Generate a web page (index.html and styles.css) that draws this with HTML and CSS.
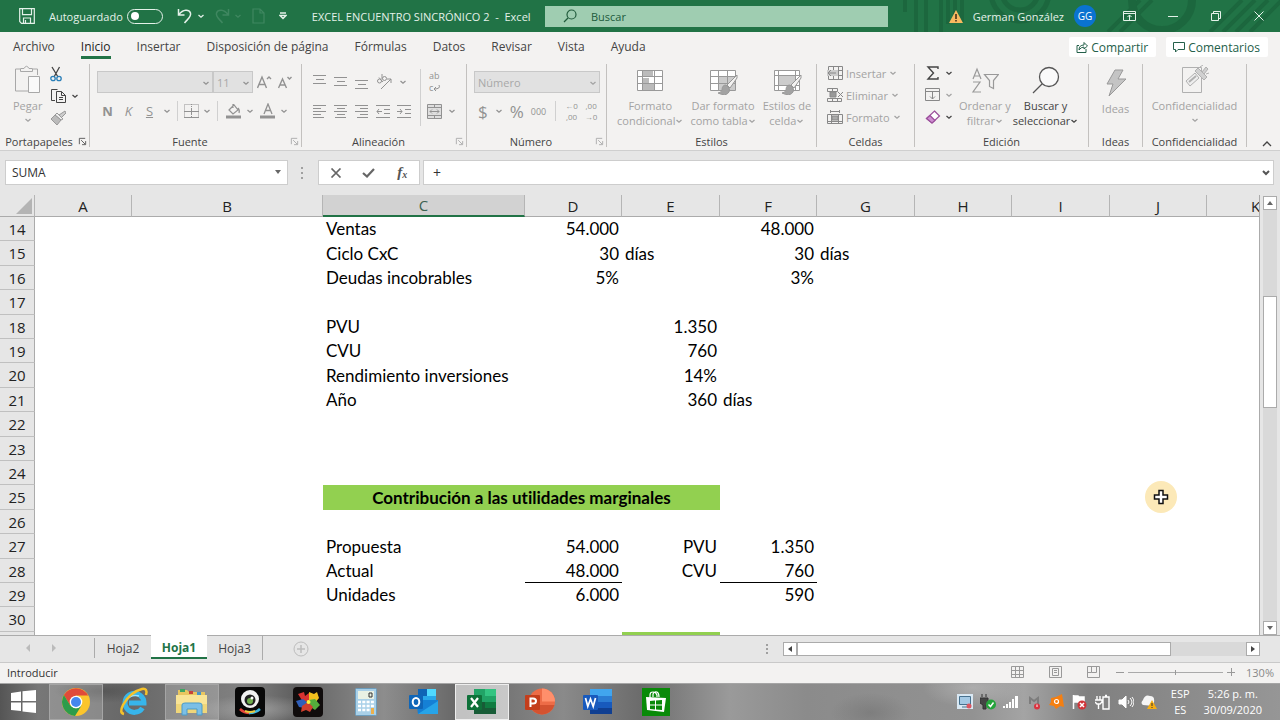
FILE: index.html
```html
<!DOCTYPE html>
<html lang="es">
<head>
<meta charset="utf-8">
<title>EXCEL ENCUENTRO SINCRÓNICO 2 - Excel</title>
<link rel="stylesheet" href="styles.css">
</head>
<body>
<svg class="defs" aria-hidden="true">
  <symbol id="chev" viewBox="0 0 8 8"><path d="M1.5 3 4 5.2 6.500 3" fill="none" stroke="currentColor" stroke-width="1.300"/></symbol>
  <symbol id="launch" viewBox="0 0 10 10"><path d="M1.500 8V1.500H8M3.500 3.500 8 8M8.500 4.500v4h-4" fill="none" stroke="currentColor"/></symbol>
  <symbol id="brush" viewBox="0 0 20 22"><path d="M19 1 9 11l3 3L19 4z" fill="#f3f2f1" stroke="#979797"/><path d="M8 11q-4 0-4 5-1 3-4 3 8 4 11-1 1-2 0-4z" fill="#a2a2a2"/></symbol>
</svg>
<div class="app">
  <header class="titlebar">
    <svg class="pattern" viewBox="0 0 430 32" aria-hidden="true" fill="none" stroke="#185c37" opacity=".5">
      <path d="M55 0v12M66 0v32M76 0v32M91 0v32M98 0v24M105 0v14M112 0v22" stroke-width="4"/>
      <circle cx="170" cy="-8" r="18" stroke-width="5"/><circle cx="170" cy="-8" r="29" stroke-width="5"/>
      <path d="m258 32 32-32M270 32l32-32M360 32l32-32M373 32l32-32M386 32l32-32M400 32l32-32" stroke-width="4"/>
      <circle cx="312" cy="0" r="30" stroke-width="8"/>
    </svg>
    <div class="quick">
      <button class="qbtn save" aria-label="Guardar"><svg width="16" height="16" viewBox="0 0 16 16" fill="none" stroke="currentColor" stroke-width="1.200"><path d="M.7.7h14.600v14.600H2.500L.7 13.500zM3.500.7v6h9v-6M4.500 15v-5h7v5M6.500 12v3"/></svg></button>
      <label class="auto">Autoguardado<input type="checkbox" role="switch"></label>
      <button class="qbtn undo" aria-label="Deshacer"><svg width="16" height="16" viewBox="0 0 16 16" fill="none" stroke="currentColor" stroke-width="1.500"><path d="M1.500 1v6h6M2 6.500C6 1 12 1 13.500 5c1 4-3 6-6 10"/></svg><svg width="8" height="8"><use href="#chev"/></svg></button>
      <button class="qbtn redo" disabled aria-label="Rehacer"><svg width="16" height="16" viewBox="0 0 16 16" fill="none" stroke="currentColor" stroke-width="1.500"><path d="M14.500 1v6h-6M14 6.500C10 1 4 1 2.500 5c-1 4 3 6 6 10"/></svg><svg width="8" height="8"><use href="#chev"/></svg></button>
      <button class="qbtn newdoc" disabled aria-label="Nuevo"><svg width="13" height="16" viewBox="0 0 13 16" fill="none" stroke="currentColor" stroke-width="1.200"><path d="M1 1h7l4 4v10H1zM8 1v4h4"/></svg></button>
      <button class="qbtn custom" aria-label="Personalizar"><svg width="8" height="8" viewBox="0 0 8 8" fill="none" stroke="currentColor" stroke-width="1.300"><path d="M1 1h6M1 3.500h6L4 6.500z"/></svg></button>
      <h1 class="doc">EXCEL ENCUENTRO SINCRÓNICO 2 &nbsp;- &nbsp;Excel</h1>
    </div>
    <div class="search">
      <svg width="14" height="14" viewBox="0 0 14 14" fill="none" stroke="#215b3c" stroke-width="1.200"><circle cx="8.500" cy="5.500" r="4.500"/><path d="M5 9 1 13"/></svg>
      <input type="search" placeholder="Buscar" aria-label="Buscar">
    </div>
    <div class="account">
      <svg width="14" height="13" viewBox="0 0 14 13"><path d="M7 0 14 13H0z" fill="#f8ba60"/><path d="M7 4v5M7 10v1.500" stroke="#463018" stroke-width="1.600"/></svg>
      <span class="user">German González</span>
      <span class="avatar">GG</span>
      <button class="wbtn" aria-label="Opciones de cinta"><svg width="14" height="11" viewBox="0 0 14 11" fill="none" stroke="currentColor"><path d="M.5.5h12v9H.5zM.5 2.500h12M6.500 9V4M4.500 6l2-2 2 2"/></svg></button>
      <button class="wbtn" aria-label="Minimizar"><svg width="10" height="10" viewBox="0 0 10 10" stroke="currentColor"><path d="M0 5.500h10"/></svg></button>
      <button class="wbtn" aria-label="Restaurar"><svg width="10" height="10" viewBox="0 0 10 10" fill="none" stroke="currentColor"><path d="M.5 2.500h7v7h-7zM2.500 2V.5h7v7H8"/></svg></button>
      <button class="wbtn" aria-label="Cerrar"><svg width="10" height="10" viewBox="0 0 10 10" stroke="currentColor"><path d="m.5.5 9 9M9.500.5l-9 9"/></svg></button>
    </div>
  </header>

  <nav class="tabs">
    <button>Archivo</button><button class="on">Inicio</button><button>Insertar</button><button>Disposición de página</button><button>Fórmulas</button><button>Datos</button><button>Revisar</button><button>Vista</button><button>Ayuda</button>
    <div class="share">
      <button><svg width="12" height="12" viewBox="0 0 12 12" fill="none" stroke="currentColor"><path d="M3 4.500H1v7h9V8M3 9q0-5 5-5V1.500L11.500 5 8 8V6Q5 6 3 9z"/></svg>Compartir</button>
      <button><svg width="12" height="12" viewBox="0 0 12 12" fill="none" stroke="currentColor"><path d="M.5 1.500h11v7H5L2.500 11V8.500h-2z"/></svg>Comentarios</button>
    </div>
  </nav>

  <section class="ribbon">
    <div class="group g-clip">
      <div class="body">
        <button class="big off"><svg width="28" height="30" viewBox="0 0 28 30" fill="none" stroke="#a8a8a8"><path d="M6 4H1.500v22H14M19 4h4.500v6"/><path d="M6.500 6.500V3.500H10Q12.500-1 15 3.500h3.500v3z"/><path d="M14.500 11.500h11v16h-11z" fill="#fafafa"/></svg>Pegar<svg width="8" height="8"><use href="#chev"/></svg></button>
        <div class="stack">
          <button aria-label="Cortar"><svg width="12" height="16" viewBox="0 0 12 16" fill="none"><path d="M2 1l6 10M9.500 1 4 11" stroke="#444" stroke-width="1.300"/><circle cx="3" cy="12.500" r="2.200" stroke="#2a7fb8" stroke-width="1.300"/><circle cx="9" cy="12.500" r="2.200" stroke="#2a7fb8" stroke-width="1.300"/></svg></button>
          <button aria-label="Copiar"><svg width="17" height="16" viewBox="0 0 17 16" fill="none" stroke="#444"><path d="M5 12.500H1.500v-11h6"/><path d="M6.500 3.500h5l4 4v7h-9zM11.500 3.500v4h4M9 9.500h4M9 11.500h4"/></svg><svg width="8" height="8"><use href="#chev"/></svg></button>
          <button class="off" aria-label="Copiar formato"><svg width="16" height="16" viewBox="0 0 16 16"><path d="M15 1 9 5l2 3 5-5z" fill="#ccc" stroke="#999"/><path d="m7 3 6 6-2 1-6-5z" fill="#eee" stroke="#999"/><path d="M5 5 1 9l6 6 4-5z" fill="#bbb" stroke="#999"/></svg></button>
        </div>
      </div>
      <div class="foot"><span>Portapapeles</span><button aria-label="Portapapeles"><svg width="9" height="9"><use href="#launch" width="9" height="9"/></svg></button></div>
    </div>

    <div class="group g-font off">
      <div class="body rows">
        <div class="row">
          <span class="sel w-font"><select disabled aria-label="Fuente"><option></option></select><svg width="8" height="8"><use href="#chev"/></svg></span><span class="sel w-size"><select disabled aria-label="Tamaño"><option>11</option></select><svg width="8" height="8"><use href="#chev"/></svg></span>
          <button class="glyph grow" aria-label="Aumentar tamaño"><svg width="15" height="14" viewBox="0 0 15 14" fill="none" stroke="currentColor" stroke-width="1.400"><path d="M.5 13 5 2l4.500 11M2 9.500h6M10 4l2-2 2 2"/></svg></button>
          <button class="glyph" aria-label="Reducir tamaño"><svg width="14" height="14" viewBox="0 0 14 14" fill="none" stroke="currentColor" stroke-width="1.400"><path d="M.5 13 4.500 4l4 9M2 10h5M9.500 2l2 2 2-2"/></svg></button>
        </div>
        <div class="row r-bold">
          <button class="ltr"><b>N</b></button><button class="ltr"><i>K</i></button><button class="ltr"><u>S</u></button><svg width="8" height="8"><use href="#chev"/></svg>
          <span class="vr"></span>
          <button aria-label="Bordes"><svg width="15" height="15" viewBox="0 0 15 15" fill="none" stroke="currentColor"><path d="M.5.5h14v13H.5zM7.500 0v14" stroke-dasharray="1 1"/><path d="M0 7.500h15M0 13.500h15M7.500 4v7"/></svg></button><svg width="8" height="8"><use href="#chev"/></svg>
          <span class="vr"></span>
          <button class="tint" aria-label="Relleno"><svg width="16" height="16" viewBox="0 0 16 16" fill="none" stroke="currentColor" stroke-width="1.200"><path d="M3 7 8 2l4 5-5 4zM7 5V1M12 5q2 2 1 5"/><path d="M0 14h15" stroke-width="3"/></svg></button><svg width="8" height="8"><use href="#chev"/></svg>
          <button class="tint" aria-label="Color de fuente"><svg width="16" height="16" viewBox="0 0 16 16" fill="none" stroke="currentColor" stroke-width="1.300"><path d="m4 11 4-10 4 10M5 7.500h6"/><path d="M0 14h15" stroke-width="3"/></svg></button><svg width="8" height="8"><use href="#chev"/></svg>
        </div>
      </div>
      <div class="foot"><span>Fuente</span><button aria-label="Fuente"><svg width="9" height="9"><use href="#launch" width="9" height="9"/></svg></button></div>
    </div>

    <div class="group g-align off">
      <div class="body rows">
        <div class="row r-al">
          <button aria-label="Arriba"><svg width="14" height="16" viewBox="0 0 14 16" stroke="currentColor"><path d="M0 1.500h13M3 5.500h8M0 9.500h13"/></svg></button>
          <button aria-label="Medio"><svg width="14" height="16" viewBox="0 0 14 16" stroke="currentColor"><path d="M0 3.500h13M3 7.500h8M0 11.500h13"/></svg></button>
          <button aria-label="Abajo"><svg width="14" height="16" viewBox="0 0 14 16" stroke="currentColor"><path d="M0 6.500h13M3 10.500h8M0 14.500h13"/></svg></button>
          <button aria-label="Orientación"><svg width="16" height="16" viewBox="0 0 16 16" fill="none" stroke="currentColor"><circle cx="3.500" cy="7" r="2"/><path d="M3 3.500 7 8"/><circle cx="8.500" cy="4.500" r="2"/><path d="M6 0v5M5 15 15 5M11 5h4v4"/></svg></button>
          <svg width="8" height="8"><use href="#chev"/></svg>
        </div>
        <div class="row r-al">
          <button aria-label="Izquierda"><svg width="14" height="14" viewBox="0 0 14 14" stroke="currentColor"><path d="M0 1.500h13M0 4.500h8M0 7.500h13M0 10.500h8M0 13.500h11"/></svg></button>
          <button aria-label="Centro"><svg width="14" height="14" viewBox="0 0 14 14" stroke="currentColor"><path d="M0 1.500h13M3 4.500h8M0 7.500h13M3 10.500h8M1 13.500h11"/></svg></button>
          <button aria-label="Derecha"><svg width="14" height="14" viewBox="0 0 14 14" stroke="currentColor"><path d="M0 1.500h13M5 4.500h8M0 7.500h13M5 10.500h8M2 13.500h11"/></svg></button>
          <button aria-label="Reducir sangría"><svg width="14" height="14" viewBox="0 0 14 14" fill="none" stroke="currentColor"><path d="M0 1.500h14M8 5.500h6M8 9.500h6M0 13.500h14M1 7.500h5M3 5 1 7.500 3 10"/></svg></button>
          <button aria-label="Aumentar sangría"><svg width="14" height="14" viewBox="0 0 14 14" fill="none" stroke="currentColor"><path d="M0 1.500h14M8 5.500h6M8 9.500h6M0 13.500h14M0 7.500h5M3 5l2 2.500L3 10"/></svg></button>
        </div>
      </div>
      <div class="side">
        <button class="wrap" aria-label="Ajustar texto"><span>ab</span><span>c<svg width="8" height="12" viewBox="0 0 8 12" fill="none" stroke="currentColor"><path d="M6 3q2 4-5 4M3 5 1 7l2 2"/></svg></span></button>
        <div class="row"><button aria-label="Combinar"><svg width="15" height="15" viewBox="0 0 15 15" fill="#dedede" stroke="currentColor"><path d="M.5.5h14v14H.5zM.5 3.500h14M.5 11.500h14M7.500.5v3M7.500 11.500v3M3 7.500h9M5 5.500 3 7.500l2 2M10 5.500l2 2-2 2"/></svg></button><svg width="8" height="8"><use href="#chev"/></svg></div>
      </div>
      <div class="foot"><span>Alineación</span><button aria-label="Alineación"><svg width="9" height="9"><use href="#launch" width="9" height="9"/></svg></button></div>
    </div>

    <div class="group g-num off">
      <div class="body rows">
        <div class="row"><span class="sel w-num"><select disabled aria-label="Formato de número"><option>Número</option></select><svg width="8" height="8"><use href="#chev"/></svg></span></div>
        <div class="row r-num">
          <button class="cur">$</button><svg width="8" height="8"><use href="#chev"/></svg><button class="cur">%</button><button class="zero">000</button><span class="vr"></span>
          <button class="dec"><span>←0</span><span>,00</span></button><button class="dec"><span>,00</span><span>→0</span></button>
        </div>
      </div>
      <div class="foot"><span>Número</span><button aria-label="Número"><svg width="9" height="9"><use href="#launch" width="9" height="9"/></svg></button></div>
    </div>

    <div class="group g-style off">
      <div class="body">
        <button class="big"><svg width="28" height="30" viewBox="0 0 28 30" fill="none" stroke="#999"><path d="M1.500 5.500h25v20h-25z" fill="#fff"/><path d="M7 6h10v5H7zM7 13h6v5H7zM7 19h11v6H7z" fill="#bbb" stroke="none"/><path d="M1 11.500h26M1 18.500h26M6.500 5v21M18.500 5v21"/></svg>Formato<span>condicional<svg width="8" height="8"><use href="#chev"/></svg></span></button>
        <button class="big"><svg width="32" height="30" viewBox="0 0 32 30" fill="none" stroke="#999"><path d="M3.500 5.500h25v20h-25z" fill="#fff"/><path d="M12 12h16v13H12z" fill="#ccc" stroke="none"/><path d="M3 11.500h26M3 18.500h26M11.500 5v21M20.500 5v21"/><use href="#brush" x="11" y="9" width="20" height="22"/></svg>Dar formato<span>como tabla<svg width="8" height="8"><use href="#chev"/></svg></span></button>
        <button class="big"><svg width="32" height="30" viewBox="0 0 32 30" fill="none" stroke="#999"><path d="M3.500 5.500h25v20h-25z" fill="#fff"/><path d="M8 11h16v10H8z" fill="#ccc" stroke="none"/><path d="M3 10.500h26M3 20.500h26M7.500 5v21M24.500 5v21"/><use href="#brush" x="11" y="9" width="20" height="22"/></svg>Estilos de<span>celda<svg width="8" height="8"><use href="#chev"/></svg></span></button>
      </div>
      <div class="foot"><span>Estilos</span></div>
    </div>

    <div class="group g-cell off">
      <div class="body cells">
        <button><svg width="16" height="14" viewBox="0 0 16 14" fill="none" stroke="#888"><path d="M1.500.5h14v13h-14zM1 4.500h14M1 9.500h14M6.500 1v12M11.500 1v12"/><path d="M0 4h11v6H0z" fill="#ccc" stroke="none"/><path d="M1 7h8M4 4 1 7l3 3"/></svg>Insertar<svg width="8" height="8"><use href="#chev"/></svg></button>
        <button><svg width="16" height="14" viewBox="0 0 16 14" fill="none" stroke="#888"><path d="M.5.5h10v3H.5zM.5 10.500h14v3H.5zM5.500 0v3M5.500 11v3M10.500 11v3"/><path d="M3 4h6v5H3z" fill="#999"/><path d="m11 4 5 5M16 4l-5 5"/></svg>Eliminar<svg width="8" height="8"><use href="#chev"/></svg></button>
        <button><svg width="16" height="14" viewBox="0 0 16 14" fill="none" stroke="#888"><path d="M3.500 0v3M12.500 0v3M3 1.500h10M.5 4.500h15v9H.5zM4.500 4v10M11.500 4v10M0 11.500h15"/><path d="M5 6h6v4H5z" fill="#aaa"/></svg>Formato<svg width="8" height="8"><use href="#chev"/></svg></button>
      </div>
      <div class="foot"><span>Celdas</span></div>
    </div>

    <div class="group g-edit">
      <div class="body">
        <div class="cells edit">
          <button aria-label="Autosuma"><svg width="14" height="14" viewBox="0 0 14 14" fill="none" stroke="#444" stroke-width="1.400"><path d="M12 3V1H2l5.500 6L2 13h10v-2"/></svg><svg width="8" height="8"><use href="#chev"/></svg></button>
          <button class="off" aria-label="Rellenar"><svg width="16" height="14" viewBox="0 0 16 14" fill="none" stroke="#888"><path d="M.5.5h14v12H.5zM.5 3.500h14M7.500 4v7M5 8.500 7.500 11 10 8.500"/></svg><svg width="8" height="8"><use href="#chev"/></svg></button>
          <button aria-label="Borrar"><svg width="15" height="14" viewBox="0 0 15 14" stroke="#9b4f9b" stroke-width="1.200"><path d="M9 1 14 6 6.500 13 1 8.500z" fill="#fff"/><path d="m4.500 5.500 5 5L6.500 13 1 8.500z" fill="#cf8fd2"/></svg><svg width="8" height="8"><use href="#chev"/></svg></button>
        </div>
        <button class="big off sort"><svg width="28" height="30" viewBox="0 0 28 30" fill="none" stroke="#999" stroke-width="1.200"><path d="m2 14 4-10 4 10M3.500 11h5M2 17h7L2 27h8"/><path d="M13.500 9.500h14l-5 6v8l-4-2v-6z"/></svg>Ordenar y<span>filtrar<svg width="8" height="8"><use href="#chev"/></svg></span></button>
        <button class="big find"><svg width="28" height="30" viewBox="0 0 28 30" fill="#fafafa" stroke="#555" stroke-width="1.300"><circle cx="17" cy="12" r="9.500"/><path d="M10 19 1 28"/></svg>Buscar y<span>seleccionar<svg width="8" height="8"><use href="#chev"/></svg></span></button>
      </div>
      <div class="foot"><span>Edición</span></div>
    </div>

    <div class="group g-idea off">
      <div class="body"><button class="big"><svg width="24" height="30" viewBox="0 0 24 30" fill="#c4c4c4" stroke="#999"><path d="M11 2h8l-5 9h8L5 28l4-12H3z"/></svg>Ideas</button></div>
      <div class="foot"><span>Ideas</span></div>
    </div>

    <div class="group g-conf off">
      <div class="body"><button class="big"><svg width="28" height="30" viewBox="0 0 28 30" fill="none" stroke="#b0b0b0"><path d="M1.500 2.500h19v25h-19z"/><path d="m5 16 9-8 4 5-9 8z" fill="#eee"/><path d="m8 17 7-6" stroke-width="2"/><path d="m14 6 3-3 9 9-3 3zM21 7l4-5 2 2-4 5M19 2l3-2M25 9l3-1" fill="#d0d0d0"/></svg>Confidencialidad<svg width="8" height="8"><use href="#chev"/></svg></button></div>
      <div class="foot"><span>Confidencialidad</span></div>
    </div>
    <button class="collapse" aria-label="Contraer"><svg width="10" height="7" viewBox="0 0 10 7" fill="none" stroke="#444" stroke-width="1.300"><path d="m1 6 4-4 4 4"/></svg></button>
  </section>

  <section class="fbar">
    <div class="namebox"><input type="text" value="SUMA" aria-label="Cuadro de nombres"><button aria-label="Nombres"><svg width="8" height="5" viewBox="0 0 8 5"><path d="M1 0h6L4 4z" fill="#666"/></svg></button></div>
    <svg class="grip" width="3" height="12" viewBox="0 0 3 12" fill="#a0a0a0"><path d="M0 0h2v2H0zM0 5h2v2H0zM0 10h2v2H0z"/></svg>
    <div class="fxbox">
      <button aria-label="Cancelar"><svg width="12" height="10" viewBox="0 0 12 10" stroke="#666" stroke-width="1.700"><path d="m1.500.5 9 9M10.500.5l-9 9"/></svg></button>
      <button aria-label="Introducir"><svg width="13" height="10" viewBox="0 0 13 10" fill="none" stroke="#666" stroke-width="2.200"><path d="m1 5 4 3.500L12 1"/></svg></button>
      <button class="fx" aria-label="Insertar función">f<small>x</small></button>
    </div>
    <div class="formula"><input type="text" value="+" aria-label="Barra de fórmulas"><button aria-label="Expandir"><svg width="8" height="6" viewBox="0 0 8 6" fill="none" stroke="#555" stroke-width="2"><path d="m1 1 3 3 3-3"/></svg></button></div>
  </section>

  <main class="work">
    <div class="sheet">
      <table>
        <colgroup><col class="c-head"><col class="c-a"><col class="c-b"><col class="c-c"><col class="c-d"><col class="c-e"><col class="c-d"><col class="c-e"><col class="c-d"><col class="c-e"><col class="c-d"><col class="c-e"></colgroup>
        <thead><tr><th class="corner"><svg width="16" height="16" viewBox="0 0 16 16"><path d="M16 0v16H0z" fill="#b4b4b4"/></svg></th><th>A</th><th>B</th><th class="cur-col">C</th><th>D</th><th>E</th><th>F</th><th>G</th><th>H</th><th>I</th><th>J</th><th>K</th></tr></thead>
        <tbody>
          <tr><th>14</th><td></td><td></td><td>Ventas</td><td class="n">54.000</td><td></td><td class="n">48.000</td><td></td></tr>
          <tr><th>15</th><td></td><td></td><td>Ciclo CxC</td><td class="n">30</td><td>días</td><td class="n">30</td><td>días</td></tr>
          <tr><th>16</th><td></td><td></td><td>Deudas incobrables</td><td class="n">5%</td><td></td><td class="n">3%</td><td></td></tr>
          <tr><th>17</th></tr>
          <tr><th>18</th><td></td><td></td><td>PVU</td><td></td><td class="n">1.350</td></tr>
          <tr><th>19</th><td></td><td></td><td>CVU</td><td></td><td class="n">760</td></tr>
          <tr><th>20</th><td></td><td></td><td>Rendimiento inversiones</td><td></td><td class="n">14%</td></tr>
          <tr><th>21</th><td></td><td></td><td>Año</td><td></td><td class="n">360</td><td>días</td></tr>
          <tr><th>22</th></tr>
          <tr><th>23</th></tr>
          <tr><th>24</th></tr>
          <tr><th>25</th><td></td><td></td><td class="green" colspan="3">Contribución a las utilidades marginales</td></tr>
          <tr><th>26</th></tr>
          <tr><th>27</th><td></td><td></td><td>Propuesta</td><td class="n">54.000</td><td class="n">PVU</td><td class="n">1.350</td></tr>
          <tr><th>28</th><td></td><td></td><td>Actual</td><td class="n line">48.000</td><td class="n">CVU</td><td class="n line">760</td></tr>
          <tr><th>29</th><td></td><td></td><td>Unidades</td><td class="n">6.000</td><td></td><td class="n">590</td></tr>
          <tr><th>30</th></tr>
          <tr><th></th><td></td><td></td><td></td><td></td><td class="green"></td></tr>
        </tbody>
      </table>
      <svg class="pointer" width="32" height="32" viewBox="0 0 32 32"><circle cx="16" cy="16" r="16" fill="#fce9b8"/><path d="M14 9.500h4V14h4.500v4H18v4.500h-4V18H9.500v-4H14z" fill="#fff" stroke="#111" stroke-width="1.500"/></svg>
    </div>
    <div class="vscroll">
      <button aria-label="Subir"><svg width="6" height="4" viewBox="0 0 6 4"><path d="M3 0 6 4H0z" fill="#666"/></svg></button>
      <div class="vtrack"><div class="vthumb"></div></div>
      <button aria-label="Bajar"><svg width="6" height="4" viewBox="0 0 6 4"><path d="M3 4 6 0H0z" fill="#666"/></svg></button>
    </div>
  </main>

  <nav class="sheets">
    <div class="snav"><svg width="4" height="8" viewBox="0 0 4 8"><path d="M4 0v8L0 4z" fill="#bbb"/></svg><svg width="4" height="8" viewBox="0 0 4 8"><path d="M0 0v8l4-4z" fill="#bbb"/></svg></div>
    <button class="stab">Hoja2</button><button class="stab on">Hoja1</button><button class="stab last">Hoja3</button>
    <button class="add" aria-label="Hoja nueva"><svg width="16" height="16" viewBox="0 0 16 16" fill="none" stroke="#bdbdbd"><circle cx="8" cy="8" r="7"/><path d="M8 4v8M4 8h8" stroke-width="1.500"/></svg></button>
    <svg class="sgrip" width="3" height="12" viewBox="0 0 3 12" fill="#a0a0a0"><path d="M0 0h2v2H0zM0 4h2v2H0zM0 8h2v2H0z"/></svg>
    <div class="hscroll">
      <button aria-label="Izquierda"><svg width="4" height="6" viewBox="0 0 4 6"><path d="M4 0v6L0 3z" fill="#444"/></svg></button>
      <div class="htrack"><div class="hthumb"></div></div>
      <button aria-label="Derecha"><svg width="4" height="6" viewBox="0 0 4 6"><path d="M0 0v6l4-3z" fill="#444"/></svg></button>
    </div>
  </nav>

  <footer class="status">
    <span>Introducir</span>
    <div class="views">
      <button aria-label="Normal"><svg width="13" height="12" viewBox="0 0 13 12" fill="none" stroke="#999"><path d="M.5.5h12v11H.5zM.5 4.500h12M.5 8.500h12M4.500.5v11M8.500.5v11"/></svg></button>
      <button aria-label="Diseño de página"><svg width="13" height="12" viewBox="0 0 13 12" fill="none" stroke="#999"><path d="M.5.5h12v11H.5zM3.500 2.500h6v7h-6zM5 4.500h3M5 6.500h3"/></svg></button>
      <button aria-label="Salto de página"><svg width="13" height="12" viewBox="0 0 13 12" fill="none" stroke="#999"><path d="M.5.5h12v11H.5zM4.500.5v6h5v-6M.5 6.500h4"/></svg></button>
    </div>
    <div class="zoom"><button aria-label="Alejar"><svg width="8" height="8" stroke="#999"><path d="M0 4.500h8"/></svg></button><input type="range" min="10" max="190" value="100" aria-label="Zoom"><button aria-label="Acercar"><svg width="8" height="8" stroke="#999"><path d="M0 4.500h8M4.500 0v8"/></svg></button><span>130%</span></div>
  </footer>

  <div class="taskbar">
    <button class="start" aria-label="Inicio"><svg width="26" height="24" viewBox="0 0 26 24" fill="#fff"><path d="m0 3 10-1.500V11H0zM11.500 1.300 25 0v11H11.500zM0 12.500h10V21L0 20zM11.500 12.500H25V23l-13.500-1.500z"/></svg></button>
    <div class="apps">
      <button class="open" aria-label="Chrome"><svg width="28" height="28" viewBox="0 0 28 28"><circle cx="14" cy="14" r="14" fill="#fbc52d"/><path d="M1.900 7A14 14 0 0 1 26.100 7.500H14L8 17z" fill="#e04a3a"/><path d="M1.900 7 8.300 17.500 14 20.500l5.500-3L13 28A14 14 0 0 1 1.900 7z" fill="#2d9c4b"/><circle cx="14" cy="14" r="6.300" fill="#fff"/><circle cx="14" cy="14" r="5" fill="#4587ee"/></svg></button>
      <button aria-label="Internet Explorer"><svg width="30" height="30" viewBox="0 0 30 30" fill="none"><path d="M23.500 21A9.500 9.500 0 1 1 25 16H10" stroke="#37b5ea" stroke-width="5"/><path d="M7 14q4-7 13-5" stroke="#9be3fb" stroke-width="1.500"/><path d="M5 27q-5-1-1-9Q11 5 23 2q6-1 4 6" stroke="#f5c22b" stroke-width="2.500"/></svg></button>
      <button class="open" aria-label="Explorador"><svg width="32" height="28" viewBox="0 0 32 28"><path d="M2 2h9l2 2h16v20H2z" fill="#e9c65f"/><path d="M4 1h5v3H4z" fill="#40a560"/><path d="M13 3h4v3h-4z" fill="#c8423a"/><path d="M21 4h4v3h-4z" fill="#4794c8"/><path d="M0 7h31v18H0z" fill="#f9e496"/><path d="M0 16h31v9H0z" fill="#f0d679"/><path d="M6 27V17q0-2 3-2h14q3 0 3 2v10h-5v-6H11v6z" fill="#7cbfe6" stroke="#4a9bc9"/></svg></button>
      <button aria-label="Cámara"><svg width="30" height="30" viewBox="0 0 30 30"><rect width="30" height="30" rx="4" fill="#080808"/><path d="M5 22q4 4 10 4" stroke="#e5443b" stroke-width="2.500" fill="none"/><path d="M14 26q7 0 11-4" stroke="#40b5db" stroke-width="2.500" fill="none"/><path d="M10 24q5 2 10 0" stroke="#eac83c" stroke-width="2" fill="none"/><circle cx="15" cy="12" r="9" fill="#f2f2f2"/><circle cx="15" cy="13" r="5.500" fill="#222"/><circle cx="15" cy="14" r="3" fill="#6fae4d"/><circle cx="17" cy="11" r="1.500" fill="#fff"/></svg></button>
      <button aria-label="Molinillo"><svg width="30" height="30" viewBox="0 0 30 30"><rect width="30" height="30" rx="4" fill="#100c0c"/><path d="m5 7 6-2 1 4 4-3v8l-6 1z" fill="#d83331"/><path d="m16 5 5 2 3-2 2 6-4 5-6-2z" fill="#f3c01d"/><path d="m3 14 7-2 5 4-3 5-6-1z" fill="#305fba"/><path d="m16 13 6-1 5 6-5 5-6-4z" fill="#53ad3c"/><path d="m9 19 6-4 5 5-3 5-4-2-5 2z" fill="#d13f2e"/><circle cx="15.500" cy="15" r="2" fill="#fff23f"/></svg></button>
      <button aria-label="Calculadora"><svg width="22" height="28" viewBox="0 0 22 28"><rect x=".5" y=".5" width="21" height="27" rx="1" fill="#a9d0e8" stroke="#6c9dbd"/><path d="M3 3h16v8H3z" fill="#e9f1e4"/><path d="M14 5h3v4h-3z" fill="none" stroke="#333"/><path d="M3 14h16M3 18h16M3 22h16" stroke="#fff" stroke-width="2.500" stroke-dasharray="3 1.300"/><path d="M16 20h3v6h-3z" fill="#ecb04c"/></svg></button>
      <button aria-label="Outlook"><svg width="30" height="28" viewBox="0 0 30 28"><path d="M9 1h18v13H9z" fill="#28a8ea"/><path d="M18 1h9v7h-9z" fill="#50d9ff"/><path d="M9 1h9v7H9z" fill="#0f65b6"/><path d="M7 12h22v14H9z" fill="#1580d5"/><path d="m9 26 20-13v13z" fill="#27a4e8"/><rect y="7" width="14" height="14" rx="1" fill="#0f66b8"/><ellipse cx="7" cy="14" rx="3.300" ry="4" fill="none" stroke="#fff" stroke-width="2"/></svg></button>
      <button class="active" aria-label="Excel"><svg width="30" height="28" viewBox="0 0 30 28"><path d="M7 1h11v13H7z" fill="#21a366"/><path d="M18 1h11v7H18z" fill="#33c481"/><path d="M18 8h11v6H18z" fill="#21a366"/><path d="M7 14h22v12H7z" fill="#185c37"/><path d="M18 14h11v6H18z" fill="#107c41"/><rect y="7" width="15" height="15" rx="1" fill="#0e7139"/><path d="m4 10 7 9M11 10l-7 9" stroke="#fff" stroke-width="2.200"/></svg></button>
      <button aria-label="PowerPoint"><svg width="30" height="28" viewBox="0 0 30 28"><circle cx="17" cy="13.500" r="13" fill="#ed6c47"/><path d="M17 .5a13 13 0 0 1 13 13H17z" fill="#ff8f6b"/><path d="M4.500 17h25a13 13 0 0 1-25 0z" fill="#d35230"/><rect y="7" width="15" height="15" rx="1" fill="#c43e1c"/><path d="M5.500 19v-8.500h2.500q3 0 3 2.500T8 15.500H5.500" fill="none" stroke="#fff" stroke-width="2"/></svg></button>
      <button aria-label="Word"><svg width="30" height="28" viewBox="0 0 30 28"><path d="M7 1h22v8H7z" fill="#41a5ee"/><path d="M7 8h22v6H7z" fill="#2b7cd3"/><path d="M7 14h22v6H7z" fill="#185abd"/><path d="M7 20h22v6H7z" fill="#103f91"/><rect y="7" width="15" height="15" rx="1" fill="#185abd"/><path d="m2.500 10 2.300 8.500 2.700-7.500 2.700 7.500L12.500 10" fill="none" stroke="#fff" stroke-width="1.700"/></svg></button>
      <button aria-label="Tienda"><svg width="28" height="28" viewBox="0 0 28 28"><path d="M0 0h28v28H0z" fill="#098a09"/><path d="M8 10V7q0-3 3-3t4 3v2M11 9V6q1-3 4-2 2 1 2 5" stroke="#fff" fill="none" stroke-width="1.200"/><path d="m4 9 20 1-2 14-17-2z" fill="#fff"/><path d="m8 13 5-.500v4H8zM14 12.500l6-.500v4.500h-6zM8 17.500h5v4L8 21zM14 17.500h6V22l-6-.500z" fill="#098a09"/></svg></button>
    </div>
    <div class="tray">
      <svg width="16" height="16" viewBox="0 0 16 16"><path d="M0 0h16v15H0z" fill="#d9e8f3"/><path d="M2.500 2.500h11v8h-11zM5 13h6" fill="#a4c9e4" stroke="#47718e"/><circle cx="12" cy="12" r="2.500" fill="#db5661"/></svg>
      <svg width="16" height="16" viewBox="0 0 16 16"><path d="M2 0v3M6 0v3M0 4h8v5l-2 2v4H3v-4L0 9z" fill="#444" stroke="#333"/><circle cx="11" cy="10.500" r="5" fill="#25a43b"/><path d="m8.500 10.500 2 2 3-4" fill="none" stroke="#fff" stroke-width="1.500"/></svg>
      <svg width="16" height="16" viewBox="0 0 16 16" fill="#fff"><path d="M0 12h2v2H0zM3 10h2v4H3zM6 8h2v6H6zM9 5h2v9H9zM12 2h3v12h-3z"/></svg>
      <svg width="16" height="16" viewBox="0 0 16 16"><path d="M4 10V4l4 3 4-3v6" fill="none" stroke="#7d7d7d" stroke-width="2"/><circle cx="11" cy="12.500" r="3" fill="#da3440"/><path d="M11 10.500v2.500" stroke="#fff"/></svg>
      <svg width="16" height="16" viewBox="0 0 16 16"><path d="m2 4 5-1 6-3 1 6 1 7-4-1-4 3-2-3-5-1 2-3z" fill="#f47f12"/><circle cx="7.500" cy="7.500" r="2" fill="none" stroke="#fff" stroke-width="1.200"/></svg>
      <svg width="16" height="16" viewBox="0 0 16 16"><path d="M1.500 1v14M2 2h4l1 1h5v6H7L6 8H2" fill="#fff" stroke="#fff" stroke-width="1.500"/><circle cx="10" cy="11" r="4.500" fill="#d13438"/><path d="m8 9 4 4M12 9l-4 4" stroke="#fff" stroke-width="1.500"/></svg>
      <svg width="16" height="16" viewBox="0 0 16 16" fill="none" stroke="#fff" stroke-width="1.400"><path d="M8 3h6v12H8zM10 1.500h2M2 2v4M5 2v4M0 6h7v2L5 10H2L0 8M3.500 10v5"/></svg>
      <svg width="16" height="16" viewBox="0 0 16 16" fill="none" stroke="#fff"><path d="M1 6h3l4-4v12l-4-4H1z" fill="#fff"/><path d="M10 6q2 2 0 4M12 4q4 4 0 8M14 3q4 5 0 10"/></svg>
      <svg width="16" height="16" viewBox="0 0 16 16"><path d="M2 11q-3-2 0-5 2-6 7-4 5 0 4 6v4z" fill="#f5f5f5"/><path d="m11 6 5 9H6z" fill="#f6ae13"/><path d="M11 9v3M11 13v1" stroke="#333"/></svg>
    </div>
    <div class="lang"><span>ESP</span><span>ES</span></div>
    <div class="clock"><span>5:26 p. m.</span><span>30/09/2020</span></div>
  </div>
</div>
</body>
</html>
```
FILE: styles.css
```css
* { box-sizing: border-box; }
body { margin: 0; font-family: "Open Sans", "Noto Sans", sans-serif; font-size: 12px; color: #333; }
button, input, select { font: inherit; color: inherit; margin: 0; }
button { background: none; border: 0; padding: 0; display: flex; align-items: center; justify-content: center; white-space: nowrap; }
svg { flex: none; display: block; }
.defs { position: absolute; width: 0; height: 0; }
.app { height: 100vh; display: flex; flex-direction: column; overflow: hidden; background: #e6e6e6; }

.titlebar { position: relative; flex: none; height: 32px; display: flex; align-items: center; background: #217346; color: #e4f1e9; }
.pattern { position: absolute; right: 0; top: 0; width: 430px; height: 32px; }
.quick { flex: 0 0 545px; display: flex; align-items: center; }
.save { margin-left: 19px; }
.auto { display: flex; align-items: center; gap: 4px; margin-left: 14px; font-size: 11px; }
.auto input { appearance: none; width: 36px; height: 15px; border: 1px solid #e4f1e9; border-radius: 8px; display: flex; align-items: center; padding-left: 3px; }
.auto input::before { content: ""; width: 8px; height: 8px; border-radius: 50%; background: #fff; }
.qbtn { gap: 4px; }
.undo { margin-left: 14px; }
.redo { margin-left: 9px; color: #3f8760; }
.newdoc { margin-left: 10px; color: #3f8760; }
.custom { margin-left: 14px; }
.doc { margin: 0 0 0 25px; font-size: 11px; font-weight: 400; white-space: nowrap; }
.search { position: relative; flex: 0 1 343px; height: 21px; display: flex; align-items: center; gap: 14px; padding-left: 18px; background: #9fcdb1; }
.search input { flex: 1; min-width: 0; border: 0; background: none; padding: 0; outline: 0; font-size: 11px; }
.search input::placeholder { color: #215b3c; opacity: 1; }
.account { position: relative; flex: 1; display: flex; align-items: center; justify-content: flex-end; }
.user { margin: 0 10px; font-size: 11px; }
.avatar { width: 22px; height: 22px; border-radius: 50%; background: #0a73d0; color: #fff; font-size: 10px; line-height: 22px; text-align: center; margin-right: 12px; }
.wbtn { width: 43px; height: 32px; }

.tabs { flex: none; height: 30px; display: flex; gap: 26px; padding: 0 12px 0 13px; background: #f3f2f1; color: #444; }
.tabs > button { height: 25px; margin-top: 2px; padding-top: 2px; border-bottom: 3px solid transparent; }
.tabs > .on { border-color: #217346; color: #222; }
.share { margin-left: auto; display: flex; gap: 10px; align-items: center; }
.share button { height: 20px; gap: 3px; padding: 0 8px 0 7px; background: #fff; color: #24604a; border-radius: 2px; }

.ribbon { flex: none; display: flex; height: 89px; background: #f3f2f1; border-bottom: 1px solid #cfcfcf; padding-top: 2px; font-size: 11px; color: #444; }
.group { position: relative; display: grid; grid-template-columns: 1fr auto; grid-template-rows: 70px 16px; border-right: 1px solid #c3c1bf; height: 83px; flex: none; }
.off { color: #a3a3a3; }
.body { display: flex; grid-row: 1; grid-column: 1; min-width: 0; }
.foot { grid-row: 2; grid-column: 1 / 3; display: flex; align-items: center; justify-content: center; color: #444; padding-bottom: 1px; }
.foot span { flex: 1; text-align: center; white-space: nowrap; }
.foot button { margin-right: 2px; color: #aaa; }
.g-clip .foot button { color: #555; }
.big { flex-direction: column; justify-content: flex-start; padding-top: 1px; line-height: 15px; }
.big > svg:first-child { margin-bottom: 3px; }
.big > svg:last-child { margin-top: 3px; }
.big span { display: flex; align-items: center; }
.g-clip { width: 90px; }
.g-clip .body { padding-left: 13px; gap: 8px; }
.stack { display: flex; flex-direction: column; gap: 6px; padding-top: 2px; }
.stack button { height: 16px; gap: 4px; justify-content: flex-start; }
.rows { flex-direction: column; padding-top: 7px; gap: 7px; }
.row { display: flex; align-items: center; height: 22px; }
.sel { position: relative; height: 22px; }
.sel select { appearance: none; width: 100%; height: 22px; border: 1px solid #c8c8c8; background: #e1e1e1; padding: 0 3px; color: #a8a8a8; opacity: 1; display: block; }
.sel svg { position: absolute; right: 3px; top: 8px; }
.g-font { width: 212px; }
.g-font .rows { padding-left: 7px; color: #929292; }
.w-font { width: 116px; }
.w-size { width: 40px; }
.grow { margin: 0 6px 0 4px; }
.r-bold { padding-left: 3px; gap: 4px; }
.ltr { width: 15px; font-size: 13px; margin-right: 2px; }
.tint { margin-left: 2px; }
.vr { width: 1px; height: 20px; background: #d0d0d0; margin: 0 2px; }
.g-align { width: 165px; }
.g-align .rows { padding-left: 11px; }
.g-align .body, .side, .r-num { color: #929292; }
.r-al { gap: 7px; }
.side { grid-row: 1; grid-column: 2; width: 46px; margin: 5px 0 8px; padding-left: 6px; border-left: 1px solid #d0d0d0; display: flex; flex-direction: column; gap: 5px; }
.side .row { gap: 6px; }
.wrap { flex-direction: column; align-items: flex-start; height: 26px; font-size: 9px; line-height: 12px; padding-left: 2px; }
.wrap span { display: flex; }
.g-num { width: 140px; }
.g-num .rows { padding-left: 7px; }
.w-num { width: 126px; }
.r-num { gap: 7px; padding-left: 4px; }
.cur { font-size: 17px; }
.zero { font-size: 9px; }
.dec { flex-direction: column; font-size: 8px; line-height: 11px; }
.g-style { width: 210px; }
.g-style .body { padding-left: 10px; gap: 7px; }
.g-cell { width: 98px; }
.cells { display: flex; flex-direction: column; padding: 1px 0 0 10px; gap: 6px; }
.cells button { height: 16px; gap: 3px; justify-content: flex-start; }
.g-edit { width: 174px; }
.edit button { gap: 4px; }
.edit svg:first-child { width: 16px; }
.sort { margin-left: 6px; }
.find { margin-left: 2px; }
.g-idea { width: 54px; }
.g-conf { width: 104px; }
.g-idea .body, .g-conf .body { justify-content: center; }
.collapse { margin: auto 8px 3px auto; }

.fbar { flex: none; display: flex; height: 44px; padding: 9px 6px 10px 5px; }
.namebox, .fxbox, .formula { display: flex; background: #fff; border: 1px solid #cdcdcd; }
.namebox { flex: 0 0 283px; }
.fbar input { flex: 1; min-width: 0; border: 0; padding: 0 6px; background: none; outline: 0; }
.namebox button { width: 18px; }
.grip { margin: 7px 14px 0 13px; }
.fxbox { flex: 0 0 102px; margin-right: 3px; }
.fxbox button { flex: 1; }
.fx { font-family: "Liberation Serif", serif; font-style: italic; font-weight: 700; font-size: 15px; color: #555; }
.fx small { font-size: 10px; padding-top: 3px; }
.formula { flex: 1; }
.formula input { padding: 0 9px; font-size: 14px; }
.formula button { width: 14px; }

.work { flex: 1; min-height: 0; display: flex; }
.sheet { position: relative; flex: 1; min-width: 0; overflow: hidden; background: linear-gradient(#e6e6e6 22px, #fff 22px); border-right: 1px solid #ababab; }
table { table-layout: fixed; width: 1304px; border-collapse: separate; border-spacing: 0; font-family: Lato, "Open Sans", sans-serif; font-variant-ligatures: none; font-size: 17px; line-height: 20px; color: #000; }
.c-head { width: 35px; }
.c-a { width: 97px; }
.c-b { width: 191px; }
.c-c { width: 202px; }
.c-d { width: 97px; }
.c-e { width: 98px; }
thead tr { height: 22px; }
tbody tr { height: 24px; }
tbody tr:nth-child(5n+2), tbody tr:nth-child(5n+4) { height: 25px; }
th { font-family: "Open Sans", "Noto Sans", sans-serif; font-weight: 400; font-size: 15px; padding: 0; background: #e6e6e6; color: #222; }
thead th { border-right: 1px solid #b5b5b5; border-bottom: 1px solid #ababab; }
tbody th { border-right: 1px solid #ababab; border-bottom: 1px solid #c0c0c0; }
.corner svg { margin: 0 2px 0 auto; }
thead .cur-col { background: #d2d2d2; color: #3d6150; border-bottom: 2px solid #217346; }
td { padding: 0 3px; white-space: nowrap; }
.n { text-align: right; }
.green { background: #92d050; text-align: center; font-weight: 700; }
.line { border-bottom: 1px solid #000; }
.pointer { position: absolute; left: 1145px; top: 286px; }
.vscroll { flex: 0 0 20px; padding: 1px 3px 0 3px; display: flex; flex-direction: column; }
.vscroll button, .hscroll button { flex: 0 0 14px; background: #fff; border: 1px solid #ababab; }
.vtrack { flex: 1; background: #d9d9d9; display: flex; flex-direction: column; padding-top: 86px; }
.vthumb { height: 112px; background: #fff; border: 1px solid #ababab; }

.sheets { flex: none; height: 27px; display: flex; border-top: 1px solid #ababab; color: #444; padding-right: 20px; }
.snav { width: 95px; height: 20px; margin-top: 2px; border-right: 1px solid #ababab; display: flex; align-items: center; gap: 22px; padding-left: 26px; }
.stab { width: 56px; height: 24px; }
.sheets .on { background: #fff; color: #217346; font-weight: 700; border-bottom: 2px solid #217346; margin-top: -1px; padding-top: 3px; }
.last { border-right: 1px solid #ababab; }
.add { margin-left: 30px; height: 26px; }
.sgrip { margin: 8px 14px 0 auto; }
.hscroll { flex: 0 0 477px; height: 14px; margin-top: 6px; display: flex; }
.htrack { flex: 1; background: #d9d9d9; display: flex; }
.hthumb { width: 374px; background: #fff; border: 1px solid #ababab; }

.status { flex: none; height: 21px; display: flex; align-items: center; background: #f3f2f1; border-top: 1px solid #c9c9c9; padding: 0 6px 2px 7px; font-size: 11px; }
.views { margin-left: auto; display: flex; gap: 25px; }
.zoom { margin-left: 16px; display: flex; align-items: center; gap: 4px; color: #888; }
.zoom input { appearance: none; width: 95px; height: 9px; background: linear-gradient(#aaa, #aaa) center / 100% 1px no-repeat; }
.zoom input::-webkit-slider-thumb { appearance: none; width: 1px; height: 5px; background: #999; }
.zoom span { margin-left: 7px; }

.taskbar { flex: none; height: 37px; display: flex; align-items: center; color: #fff; border-top: 1px solid #a5a5a5;
  background:
    radial-gradient(ellipse 60px 14px at 20% 70%, #bbbbbb88, transparent),
    radial-gradient(ellipse 50px 12px at 8% 20%, #44444488, transparent),
    radial-gradient(ellipse 50px 20px at 76% 10%, #c4c4c488, transparent),
    radial-gradient(ellipse 40px 20px at 68% 80%, #70707088, transparent),
    linear-gradient(90deg, #555 0, #777 3%, #686868 10%, #818181 19%, #606060 23%, #8d8d8d 30%, #666 36%, #8a8a8a 44%, #6c6c6c 50%, #9a9a9a 57%, #8b8b8b 63%, #929292 76%, #a4a4a4 80%, #808080 85%, #969696 100%); }
.start { width: 49px; padding-right: 2px; }
.apps { display: flex; gap: 4px; }
.apps button { width: 54px; height: 36px; }
.apps .open { border: 1px solid #a5a5a5; background: #ffffff33; }
.apps .active { border: 1px solid #eee; background: #ffffff99; }
.tray { margin-left: auto; display: flex; gap: 7px; }
.lang, .clock { display: flex; flex-direction: column; align-items: center; line-height: 16px; font-size: 11px; }
.lang { margin-left: 14px; }
.clock { margin: 0 18px 0 14px; }
```
